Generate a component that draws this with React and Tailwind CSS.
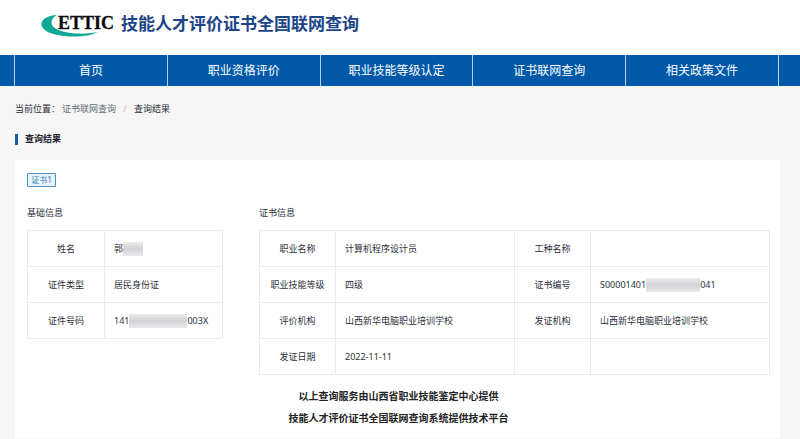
const NAV = ["首页", "职业资格评价", "职业技能等级认定", "证书联网查询", "相关政策文件"];

function Logo() {
  return (
    <svg className="h-7 w-[76px] shrink-0" viewBox="0 0 76 28" role="img" aria-label="ETTIC">
      <path
        d="M16 5C6 5.500 0.500 9.500 0.500 14c0 7.500 13 12.500 32 12.500c11 0 19-1.500 24-4.500c-6 1.200-13 1.800-19 1.600C22 23 10.500 19 10.500 12.500c0-3.200 2-5.700 5.500-7.500z"
        fill="#0fa795"
      />
      <text
        x="17"
        y="19"
        fontFamily="'Liberation Serif', serif"
        fontWeight="700"
        fontSize="18"
        fill="#0a0a0a"
        stroke="#0a0a0a"
        strokeWidth="0.3"
      >
        ETTIC
      </text>
    </svg>
  );
}

function Masked({ before, after, size }) {
  return (
    <span className="flex items-center">
      {before}
      <span
        className={`${size} h-[14px] bg-linear-to-b from-[#ebebed] via-[#d3d3d7] to-[#e9e9eb]`}
        aria-hidden="true"
      />
      {after}
    </span>
  );
}

const PERSON = [
  ["姓名", <Masked before="郭" size="w-5" />],
  ["证件类型", "居民身份证"],
  ["证件号码", <Masked before="141" after="003X" size="w-[58px]" />],
];

const CERTIFICATE = [
  ["职业名称", "计算机程序设计员", "工种名称", ""],
  ["职业技能等级", "四级", "证书编号", <Masked before="S00001401" after="041" size="w-[54px]" />],
  ["评价机构", "山西新华电脑职业培训学校", "发证机构", "山西新华电脑职业培训学校"],
  ["发证日期", "2022-11-11", "", ""],
];

function InfoTable({ title, id, rows, labelWidth }) {
  return (
    <section aria-labelledby={id}>
      <h2 id={id} className="mb-2.5 leading-[14px]">{title}</h2>
      <table className="w-full table-fixed border-collapse">
        <colgroup>
          {rows[0].map((_, i) => (
            <col key={i} className={i % 2 === 0 ? labelWidth : ""} />
          ))}
        </colgroup>
        <tbody>
          {rows.map((row, r) => (
            <tr key={r} className="h-9">
              {row.map((cell, i) =>
                i % 2 === 0 && cell ? (
                  <th key={i} scope="row" className="border border-[#e9ebf0] text-center font-normal whitespace-nowrap">
                    {cell}
                  </th>
                ) : (
                  <td key={i} className="border border-[#e9ebf0] pl-[9px] whitespace-nowrap">
                    {cell}
                  </td>
                )
              )}
            </tr>
          ))}
        </tbody>
      </table>
    </section>
  );
}

export default function App() {
  return (
    <div
      lang="zh-CN"
      className="min-h-screen bg-[#f6f6f6] font-['Noto_Sans','Noto_Sans_CJK_SC',sans-serif] text-[9px] leading-[14px] text-[#2b2f3a]"
    >
      <header className="flex h-[55px] items-center gap-1 bg-white pb-2 pl-[41px]">
        <Logo />
        <h1 className="text-[17px] leading-6 font-bold text-[#1c4587]">技能人才评价证书全国联网查询</h1>
      </header>

      <nav className="bg-[#0058a9] pr-[21px] pl-[14px]">
        <ul className="flex h-[31px] border-l border-[#b8d0e8]">
          {NAV.map((item) => (
            <li key={item} className="flex-1 border-r border-[#b8d0e8]">
              <a href="#" className="flex h-full items-center justify-center text-[12px] text-white">
                {item}
              </a>
            </li>
          ))}
        </ul>
      </nav>

      <main className="pr-5 pl-[15px]">
        <nav aria-label="当前位置" className="flex pt-4">
          <span className="w-[47px]">当前位置：</span>
          <a href="#" className="text-[#666c78]">证书联网查询</a>
          <span className="w-[18px] text-center text-[#b8bcc4]">/</span>
          <span>查询结果</span>
        </nav>

        <h2 className="mt-4 flex items-center gap-[7px] font-bold text-[#1f2430]">
          <span className="h-[11px] w-[3px] bg-[#0f5ea9]" />
          查询结果
        </h2>

        <div className="mt-[14px] bg-white pt-[13px] pr-[10px] pb-[9px] pl-3">
          <button
            type="button"
            className="flex h-[14px] w-[29px] items-center justify-center rounded-[1px] border border-[#4a92c8] bg-[#e9f4fc] text-[8px] text-[#2b7bb8]"
          >
            证书1
          </button>

          <div className="mt-[19px] grid grid-cols-[196fr_511fr] items-start gap-9">
            <InfoTable title="基础信息" id="person" rows={PERSON} labelWidth="w-[77px]" />
            <InfoTable title="证书信息" id="certificate" rows={CERTIFICATE} labelWidth="w-[76px]" />
          </div>

          <div className="mt-[10px] text-center text-[10px] leading-[22px] font-bold text-[#222]">
            <p>以上查询服务由山西省职业技能鉴定中心提供</p>
            <p>技能人才评价证书全国联网查询系统提供技术平台</p>
          </div>
        </div>
      </main>
    </div>
  );
}
